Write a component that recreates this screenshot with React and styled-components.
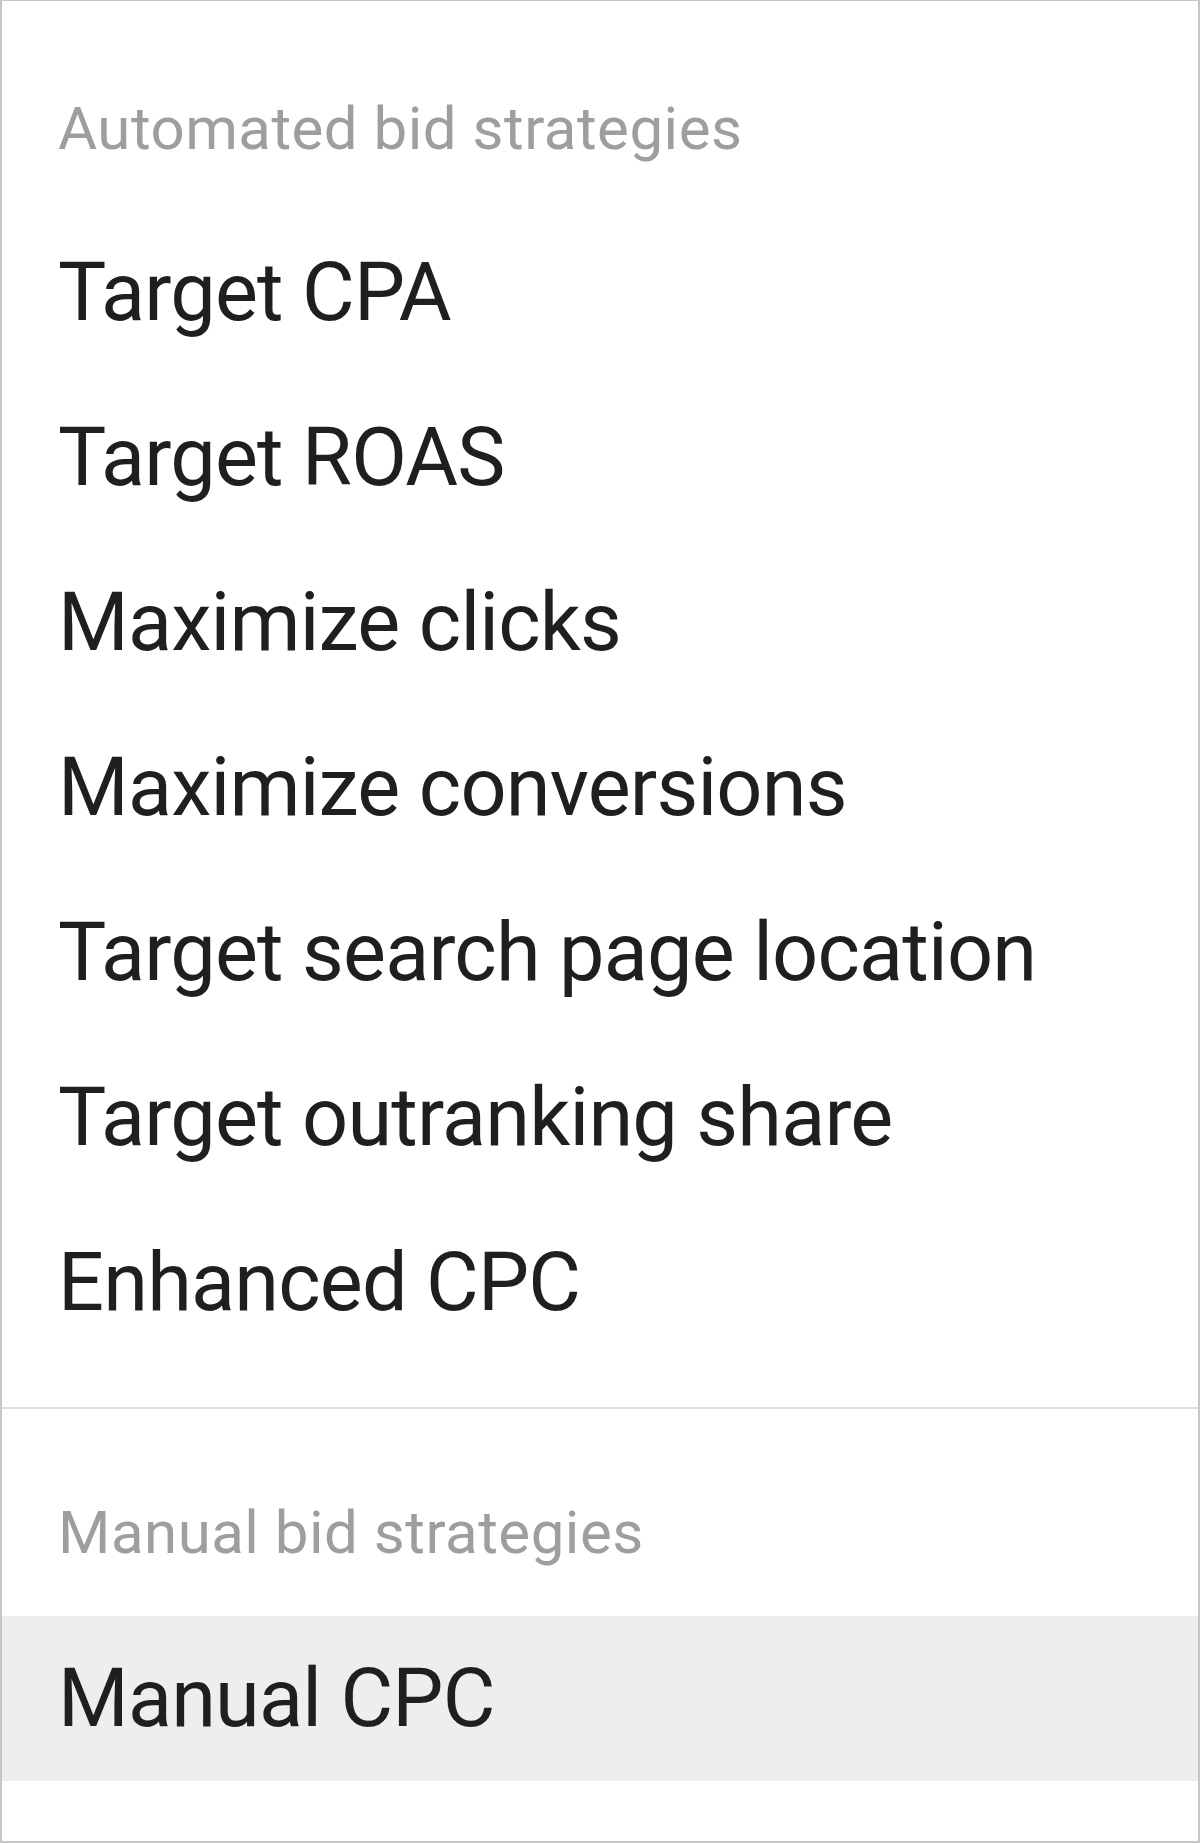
import React from "react";
import styled, { createGlobalStyle } from "styled-components";

const GlobalStyle = createGlobalStyle`
  html, body {
    margin: 0;
    padding: 0;
    background: #ffffff;
  }
  body {
    font-family: Roboto, "Noto Sans", "Liberation Sans", sans-serif;
  }
`;

//styled components
const MenuPanel = styled.div`
  box-sizing: border-box;
  width: 1200px;
  height: 1843px;
  border: 2px solid #c6c6c6;
  border-top-width: 1px;
  background: #ffffff;
  display: flex;
  flex-direction: column;
`;

const Section = styled.section`
  display: flex;
  flex-direction: column;
  padding-bottom: ${(props) => props.bottomPad || 0}px;
`;

const SectionHeading = styled.div`
  padding: ${(props) => props.topPad}px 0 ${(props) => props.bottomGap}px 56px;
  font-size: 60px;
  line-height: 88px;
  letter-spacing: 0.5px;
  color: #9e9e9e;
  font-weight: 400;
`;

const OptionList = styled.ul`
  list-style: none;
  margin: 0;
  padding: 0;
`;

const Option = styled.li`
  height: 165px;
  line-height: 165px;
  padding-left: 56px;
  font-size: 81px;
  letter-spacing: -0.8px;
  color: #1f1f1f;
  background: ${(props) => (props.selected ? "#eeeeee" : "transparent")};
  white-space: nowrap;
`;

const Divider = styled.hr`
  margin: 0;
  border: none;
  height: 2px;
  background: #dedede;
`;

const automated = [
  "Target CPA",
  "Target ROAS",
  "Maximize clicks",
  "Maximize conversions",
  "Target search page location",
  "Target outranking share",
  "Enhanced CPC"
];

function App() {
  return (
    <>
      <GlobalStyle />
      <MenuPanel>
        <Section bottomPad={42}>
          <SectionHeading topPad={84} bottomGap={37}>
            Automated bid strategies
          </SectionHeading>
          <OptionList>
            {automated.map((name) => (
              <Option key={name}>{name}</Option>
            ))}
          </OptionList>
        </Section>
        <Divider />
        <Section>
          <SectionHeading topPad={80} bottomGap={39}>
            Manual bid strategies
          </SectionHeading>
          <OptionList>
            <Option selected>Manual CPC</Option>
          </OptionList>
        </Section>
      </MenuPanel>
    </>
  );
}

export default App;
